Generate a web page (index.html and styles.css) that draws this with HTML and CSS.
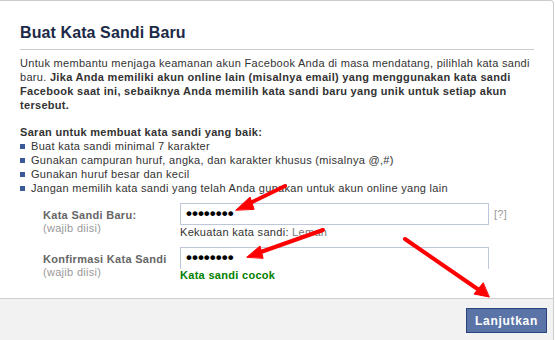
FILE: index.html
```html
<!DOCTYPE html>
<html lang="id">
<head>
  <meta charset="UTF-8" />
  <title>Buat Kata Sandi Baru</title>
  <link rel="stylesheet" href="styles.css">
</head>
<body>
  <div class="dialog">
    <div class="dialog-body">
      <h2 class="title">Buat Kata Sandi Baru</h2>
      <p class="intro">
        Untuk membantu menjaga keamanan akun Facebook Anda di masa mendatang, pilihlah kata sandi baru.
        <b>Jika Anda memiliki akun online lain (misalnya email) yang menggunakan kata sandi Facebook saat ini, sebaiknya Anda memilih kata sandi baru yang unik untuk setiap akun tersebut.</b>
      </p>

      <p class="tips-title">Saran untuk membuat kata sandi yang baik:</p>
      <ul class="tips">
        <li>Buat kata sandi minimal 7 karakter</li>
        <li>Gunakan campuran huruf, angka, dan karakter khusus (misalnya @,#)</li>
        <li>Gunakan huruf besar dan kecil</li>
        <li>Jangan memilih kata sandi yang telah Anda gunakan untuk akun online yang lain</li>
      </ul>

      <div class="field field-first">
        <div class="label">
          <span class="label-name">Kata Sandi Baru:</span>
          <span class="label-req">(wajib diisi)</span>
        </div>
        <div class="control">
          <div class="input-row">
            <div class="input">&bull;&bull;&bull;&bull;&bull;&bull;&bull;&bull;</div>
            <span class="help">[?]</span>
          </div>
          <div class="strength">Kekuatan kata sandi: <span class="weak">Lemah</span></div>
        </div>
      </div>

      <div class="field">
        <div class="label">
          <span class="label-name">Konfirmasi Kata Sandi:</span>
          <span class="label-req">(wajib diisi)</span>
        </div>
        <div class="control">
          <div class="input input-cut">&bull;&bull;&bull;&bull;&bull;&bull;&bull;&bull;</div>
          <div class="match">Kata sandi cocok</div>
        </div>
      </div>
    </div>

    <div class="dialog-footer">
      <button class="btn">Lanjutkan</button>
    </div>
  </div>

  <!-- red annotation arrows drawn over the screenshot -->
  <svg class="arrows" width="555" height="340" viewBox="0 0 555 340">
    <g stroke="#ff0000" stroke-width="4" stroke-linecap="round" fill="#ff0000">
      <line x1="285" y1="186" x2="246" y2="205" />
      <polygon points="236,210 250,197 254,209" stroke-width="1" />
      <line x1="323" y1="230" x2="258" y2="253" />
      <polygon points="247,257 260,246 263,258" stroke-width="1" />
      <line x1="405" y1="239" x2="479" y2="290" />
      <polygon points="489,297 474,294 483,283" stroke-width="1" />
    </g>
  </svg>
</body>
</html>
```

FILE: styles.css
```css
body {
  margin: 0;
  background: #fff;
  font-family: "Liberation Sans", Arial, sans-serif;
  font-size: 11px;
  letter-spacing: 0.3px;
  color: #333;
}

.dialog {
  width: 553px;
  height: 339px;
  border-top: 1px solid #ccc;
  border-right: 1px solid #ccc;
  border-top-right-radius: 4px;
  display: flex;
  flex-direction: column;
  overflow: hidden;
}

.dialog-body {
  flex: 1;
  padding: 0 19px 0 20px;
}

.title {
  margin: 0;
  padding: 23px 0 8px;
  font-size: 16px;
  line-height: 17px;
  font-weight: bold;
  letter-spacing: 0.1px;
  color: #1c2a47;
  border-bottom: 1px solid #ccc;
}

.intro {
  margin: 6px 0 0;
  line-height: 14px;
}

.tips-title {
  margin: 13px 0 0;
  font-weight: bold;
  line-height: 14px;
}

.tips {
  margin: 0;
  padding: 0 0 0 11px;
  list-style: none;
}

.tips li {
  position: relative;
  line-height: 14px;
}

.tips li::before {
  content: "";
  position: absolute;
  left: -11px;
  top: 5px;
  width: 5px;
  height: 5px;
  background: #3b5998;
}

.field {
  display: flex;
  gap: 13px;
  margin-left: 23px;
}

.field-first {
  margin-top: 8px;
}

.label {
  width: 124px;
  overflow: hidden;
  white-space: nowrap;
  display: flex;
  flex-direction: column;
  padding-top: 6px;
}

.label-name {
  font-weight: bold;
  color: #666;
  line-height: 13px;
}

.label-req {
  color: #999;
  line-height: 13px;
}

.control {
  display: flex;
  flex-direction: column;
}

.input-row {
  display: flex;
  align-items: center;
  gap: 5px;
}

.input {
  width: 297px;
  height: 20px;
  border: 1px solid #bdc7d8;
  padding: 0 5px;
  font-size: 17px;
  font-weight: bold;
  line-height: 20px;
  color: #000;
  letter-spacing: 0;
}

.input-cut {
  border-bottom: none;
  height: 21px;
}

.help {
  color: #999;
}

.strength {
  margin-top: 1px;
  line-height: 13px;
  margin-bottom: 8px;
}

.weak {
  color: #777;
}

.match {
  color: #008000;
  font-weight: bold;
  line-height: 13px;
}

.dialog-footer {
  height: 42px;
  background: #f2f2f2;
  border-top: 1px solid #ccc;
  display: flex;
  justify-content: flex-end;
  align-items: flex-start;
  padding: 9px 6px 0 0;
  box-sizing: border-box;
}

.btn {
  width: 81px;
  height: 25px;
  background: #5b74a8;
  border: 1px solid #29447e;
  color: #fff;
  font-family: "Liberation Sans", Arial, sans-serif;
  font-size: 12px;
  font-weight: bold;
  letter-spacing: 0.7px;
  padding: 0;
}

.arrows {
  position: absolute;
  left: 0;
  top: 0;
  pointer-events: none;
}
```
